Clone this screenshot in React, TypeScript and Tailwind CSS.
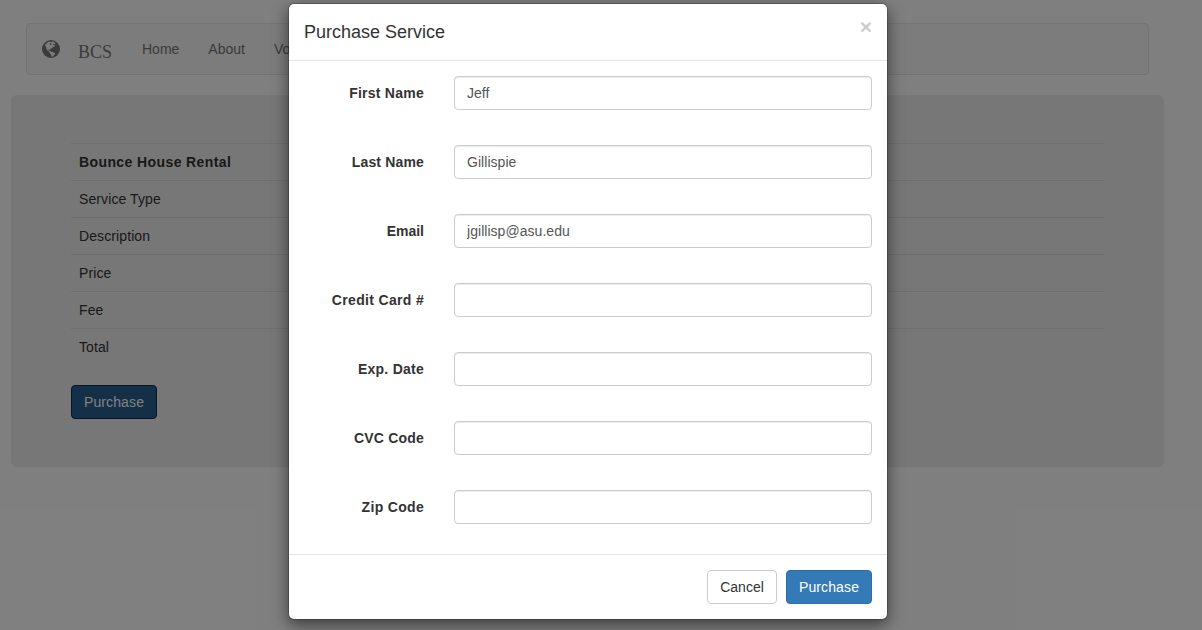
import React from 'react';

const tableRows = ['Service Type', 'Description', 'Price', 'Fee', 'Total'];

const fields = [
  { label: 'First Name', value: 'Jeff', tracking: 'tracking-[0.25px]' },
  { label: 'Last Name', value: 'Gillispie', tracking: 'tracking-[0.16px]' },
  { label: 'Email', value: 'jgillisp@asu.edu', tracking: 'tracking-normal' },
  { label: 'Credit Card #', value: '', tracking: 'tracking-[0.33px]' },
  { label: 'Exp. Date', value: '', tracking: 'tracking-[0.25px]' },
  { label: 'CVC Code', value: '', tracking: 'tracking-[0.2px]' },
  { label: 'Zip Code', value: '', tracking: 'tracking-[0.32px]' },
];

function GlobeIcon() {
  return (
    <svg className="block h-[18px] w-[18px]" viewBox="0 0 18 18" aria-hidden="true">
      <circle cx="9" cy="9" r="9" fill="#777" />
      <path
        fill="#f8f8f8"
        d="M5.4 2.4 7.4 1.4 9 2 10.4 1.4 12.8 2.2 13.4 3.8 12.4 4.4 11.6 3.6 10.8 4.6 12.6 5.2 13 6.4 11.2 6.8 10 8.2 8.4 8.8 8 9.8 6.6 9.4 6.4 10.4 8 10.8 9.2 11.8 11.2 12.2 13.2 13.2 12.4 15 10.6 16.4 9.4 16.6 9 14.4 7.4 12.8 7.2 11.6 5.4 10.4 4.4 8.6 4.2 6.8 3 6.2 3.4 4.6Z"
      />
      <path fill="#777" d="M7.8 3.4 9.4 3 9.6 4.6 8.2 5.2Z" />
    </svg>
  );
}

function Navbar() {
  return (
    <nav className="ml-[26px] flex h-[52px] w-[1123px] rounded border border-[#e7e7e7] bg-[#f8f8f8] text-[#777]">
      <div className="pl-[15px] pt-4">
        <GlobeIcon />
      </div>
      <span className="ml-[18px] mt-[18px] h-5 w-[34px] font-['Liberation_Serif',serif] text-[18px] leading-5">BCS</span>
      <ul className="ml-[15px] flex leading-5">
        {['Home', 'About', 'Volunteer'].map((item) => (
          <li key={item} className="py-[15px] pr-[14px] pl-[15px]">
            {item}
          </li>
        ))}
      </ul>
    </nav>
  );
}

function ServiceDetails() {
  return (
    <main className="ml-[11px] mt-5 h-[372px] w-[1153px] rounded-md bg-[#eee] px-[60px] py-12">
      <table className="w-full border-collapse text-left leading-5">
        <tbody>
          <tr className="h-[37px]">
            <th className="border-t border-[#ddd] px-2 py-0 font-bold tracking-[0.4px]">Bounce House Rental</th>
          </tr>
          {tableRows.map((row) => (
            <tr key={row} className="h-[37px]">
              <td className="border-t border-[#ddd] px-2 py-0 tracking-[0.1px]">{row}</td>
            </tr>
          ))}
        </tbody>
      </table>
      <button className="mt-[19px] block h-[34px] w-[86px] rounded border border-[#122b40] bg-[#286090] tracking-[0.12px] text-white">
        Purchase
      </button>
    </main>
  );
}

function PurchaseDialog() {
  return (
    <section
      role="dialog"
      className="mt-[3px] flex h-[617px] w-[600px] flex-col rounded-md border border-black/20 bg-white bg-clip-padding shadow-[0_5px_15px_rgba(0,0,0,0.5)]"
    >
      <header className="flex h-[57px] items-start justify-between border-b border-[#e5e5e5] p-[15px]">
        <h4 className="text-[18px] leading-[27px] font-normal">Purchase Service</h4>
        <button className="-mt-[3px] text-[21px] leading-[21px] font-bold text-[#ccc]">×</button>
      </header>
      <form className="flex h-[493px] flex-col gap-[35px] p-[15px]">
        {fields.map((field) => (
          <label key={field.label} className="flex h-[34px] items-center">
            <span className={`w-[120px] text-right leading-5 font-bold ${field.tracking}`}>{field.label}</span>
            <input
              type="text"
              defaultValue={field.value}
              className="ml-[30px] h-[34px] w-[418px] rounded border border-[#ccc] bg-white px-3 py-1.5 tracking-[0.04px] text-[#555] shadow-[inset_0_1px_1px_rgba(0,0,0,0.075)] outline-none"
            />
          </label>
        ))}
      </form>
      <footer className="flex grow justify-end gap-[9px] border-t border-[#e5e5e5] p-[15px]">
        <button className="h-[34px] w-[70px] rounded border border-[#ccc] bg-white">Cancel</button>
        <button className="h-[34px] w-[86px] rounded border border-[#2e6da4] bg-[#337ab7] tracking-[0.12px] text-white">
          Purchase
        </button>
      </footer>
    </section>
  );
}

export default function App() {
  return (
    <div className="relative h-[630px] w-[1202px] overflow-hidden bg-white font-['Liberation_Sans',Arial,sans-serif] text-[14px] leading-5 text-[#333]">
      <div className="pt-[23px]">
        <Navbar />
        <ServiceDetails />
      </div>
      <div className="absolute inset-0 bg-black/50" />
      <div className="absolute inset-0 flex items-start pl-[288px]">
        <PurchaseDialog />
      </div>
    </div>
  );
}
